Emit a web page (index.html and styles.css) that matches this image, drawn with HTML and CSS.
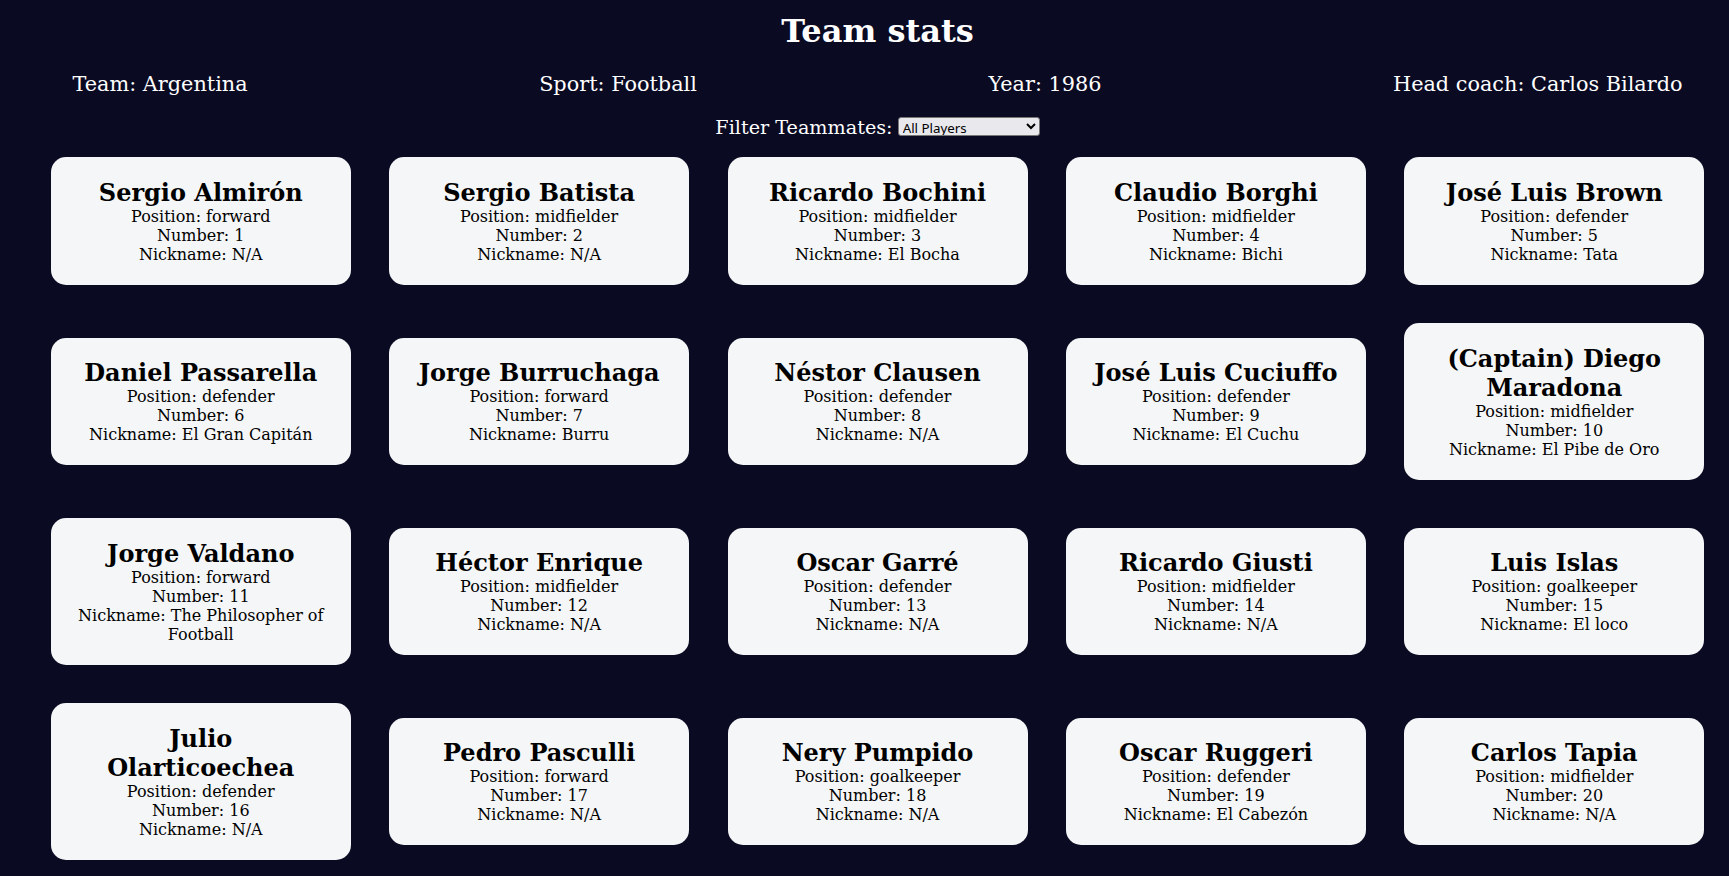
FILE: index.html
```html
<!DOCTYPE html>
<html lang="en">
<head>
<meta charset="UTF-8">
<title>Team stats</title>
<link rel="stylesheet" href="styles.css">
</head>
<body>
<h1 class="title">Team stats</h1>
<div class="team-stats">
  <p>Team: <span>Argentina</span></p>
  <p>Sport: <span>Football</span></p>
  <p>Year: <span>1986</span></p>
  <p>Head coach: <span>Carlos Bilardo</span></p>
</div>
<div class="filter">
  <label class="options-label" for="players">Filter Teammates:</label>
  <select name="players" id="players" class="players-select">
    <option value="all">All Players</option>
    <option value="nickname">Nicknames</option>
    <option value="forward">Position Forward</option>
    <option value="midfielder">Position Midfielder</option>
    <option value="defender">Position Defender</option>
    <option value="goalkeeper">Position Goalkeeper</option>
  </select>
</div>
<div class="player-cards">
  <div class="player-card"><h2>Sergio Almirón</h2><p>Position: forward</p><p>Number: 1</p><p>Nickname: N/A</p></div>
  <div class="player-card"><h2>Sergio Batista</h2><p>Position: midfielder</p><p>Number: 2</p><p>Nickname: N/A</p></div>
  <div class="player-card"><h2>Ricardo Bochini</h2><p>Position: midfielder</p><p>Number: 3</p><p>Nickname: El Bocha</p></div>
  <div class="player-card"><h2>Claudio Borghi</h2><p>Position: midfielder</p><p>Number: 4</p><p>Nickname: Bichi</p></div>
  <div class="player-card"><h2>José Luis Brown</h2><p>Position: defender</p><p>Number: 5</p><p>Nickname: Tata</p></div>
  <div class="player-card"><h2>Daniel Passarella</h2><p>Position: defender</p><p>Number: 6</p><p>Nickname: El Gran Capitán</p></div>
  <div class="player-card"><h2>Jorge Burruchaga</h2><p>Position: forward</p><p>Number: 7</p><p>Nickname: Burru</p></div>
  <div class="player-card"><h2>Néstor Clausen</h2><p>Position: defender</p><p>Number: 8</p><p>Nickname: N/A</p></div>
  <div class="player-card"><h2>José Luis Cuciuffo</h2><p>Position: defender</p><p>Number: 9</p><p>Nickname: El Cuchu</p></div>
  <div class="player-card"><h2>(Captain) Diego Maradona</h2><p>Position: midfielder</p><p>Number: 10</p><p>Nickname: El Pibe de Oro</p></div>
  <div class="player-card"><h2>Jorge Valdano</h2><p>Position: forward</p><p>Number: 11</p><p>Nickname: The Philosopher of Football</p></div>
  <div class="player-card"><h2>Héctor Enrique</h2><p>Position: midfielder</p><p>Number: 12</p><p>Nickname: N/A</p></div>
  <div class="player-card"><h2>Oscar Garré</h2><p>Position: defender</p><p>Number: 13</p><p>Nickname: N/A</p></div>
  <div class="player-card"><h2>Ricardo Giusti</h2><p>Position: midfielder</p><p>Number: 14</p><p>Nickname: N/A</p></div>
  <div class="player-card"><h2>Luis Islas</h2><p>Position: goalkeeper</p><p>Number: 15</p><p>Nickname: El loco</p></div>
  <div class="player-card"><h2>Julio Olarticoechea</h2><p>Position: defender</p><p>Number: 16</p><p>Nickname: N/A</p></div>
  <div class="player-card"><h2>Pedro Pasculli</h2><p>Position: forward</p><p>Number: 17</p><p>Nickname: N/A</p></div>
  <div class="player-card"><h2>Nery Pumpido</h2><p>Position: goalkeeper</p><p>Number: 18</p><p>Nickname: N/A</p></div>
  <div class="player-card"><h2>Oscar Ruggeri</h2><p>Position: defender</p><p>Number: 19</p><p>Nickname: El Cabezón</p></div>
  <div class="player-card"><h2>Carlos Tapia</h2><p>Position: midfielder</p><p>Number: 20</p><p>Nickname: N/A</p></div>
</div>
</body>
</html>
```

FILE: styles.css
```css
*,
*::before,
*::after {
  box-sizing: border-box;
}

:root {
  --dark-grey: #0a0a23;
  --light-grey: #f5f6f7;
  --white: #ffffff;
  --black: #000000;
}

html {
  overflow: hidden;
}

body {
  margin: 0;
  padding: 12px 5px 0 31px;
  background-color: var(--dark-grey);
  text-align: center;
  font-family: "DejaVu Serif", serif;
}

.title {
  color: var(--white);
  font-size: 32px;
  font-weight: bold;
  margin: 0;
}

.team-stats {
  color: var(--white);
  font-size: 20.8px;
  display: flex;
  justify-content: space-between;
  padding: 0 41.5px;
  margin: 22px 0 20px;
}

.team-stats p {
  margin: 0;
}

.filter {
  height: 22px;
  line-height: normal;
}

.options-label {
  color: var(--white);
  font-size: 19.2px;
}

.players-select {
  font-family: "Noto Sans", "Open Sans", sans-serif;
  font-size: 13.33px;
  width: 142px;
  height: 19px;
  padding: 0;
  background-color: #e9e9ed;
  color: #000;
  border: 1px solid #767676;
  border-radius: 3px;
  vertical-align: 1px;
}

.player-cards {
  display: flex;
  flex-wrap: wrap;
  justify-content: center;
  align-items: center;
  margin-top: 0;
}

.player-card {
  background-color: var(--light-grey);
  color: var(--black);
  padding: 20.8px;
  margin: 19.2px;
  width: 300px;
  border-radius: 15px;
}

.player-card h2 {
  font-size: 24px;
  margin: 0;
}

.player-card p {
  font-size: 16px;
  margin: 0;
}
```
